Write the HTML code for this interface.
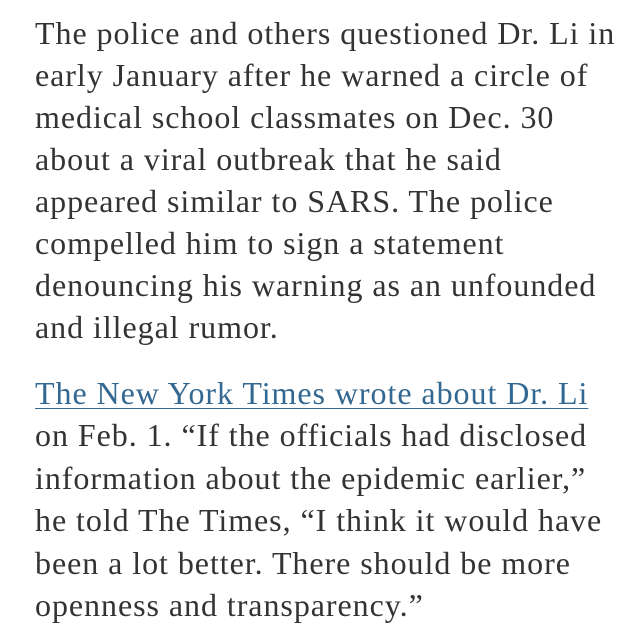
<!DOCTYPE html>
<html><head><meta charset="utf-8"><style>
html,body{margin:0;padding:0;background:#fff;width:640px;height:640px;overflow:hidden}
.t{position:absolute;left:35px;font-family:"Liberation Serif",serif;font-size:32px;color:#333;letter-spacing:0.95px;white-space:nowrap;line-height:42px}
a{color:#326891;text-decoration:underline;text-decoration-thickness:1px;text-underline-offset:4px}
</style></head><body>
<div class="t" style="top:12px">The police and others questioned Dr. Li in<br>early January after he warned a circle of<br>medical school classmates on Dec. 30<br>about a viral outbreak that he said<br>appeared similar to SARS. The police<br>compelled him to sign a statement<br>denouncing his warning as an unfounded<br>and illegal rumor.</div>
<div class="t" style="top:372px;line-height:42.4px"><a>The New York Times wrote about Dr. Li</a><br>on Feb. 1. “If the officials had disclosed<br>information about the epidemic earlier,”<br>he told The Times, “I think it would have<br>been a lot better. There should be more<br>openness and transparency.”</div>
</body></html>
